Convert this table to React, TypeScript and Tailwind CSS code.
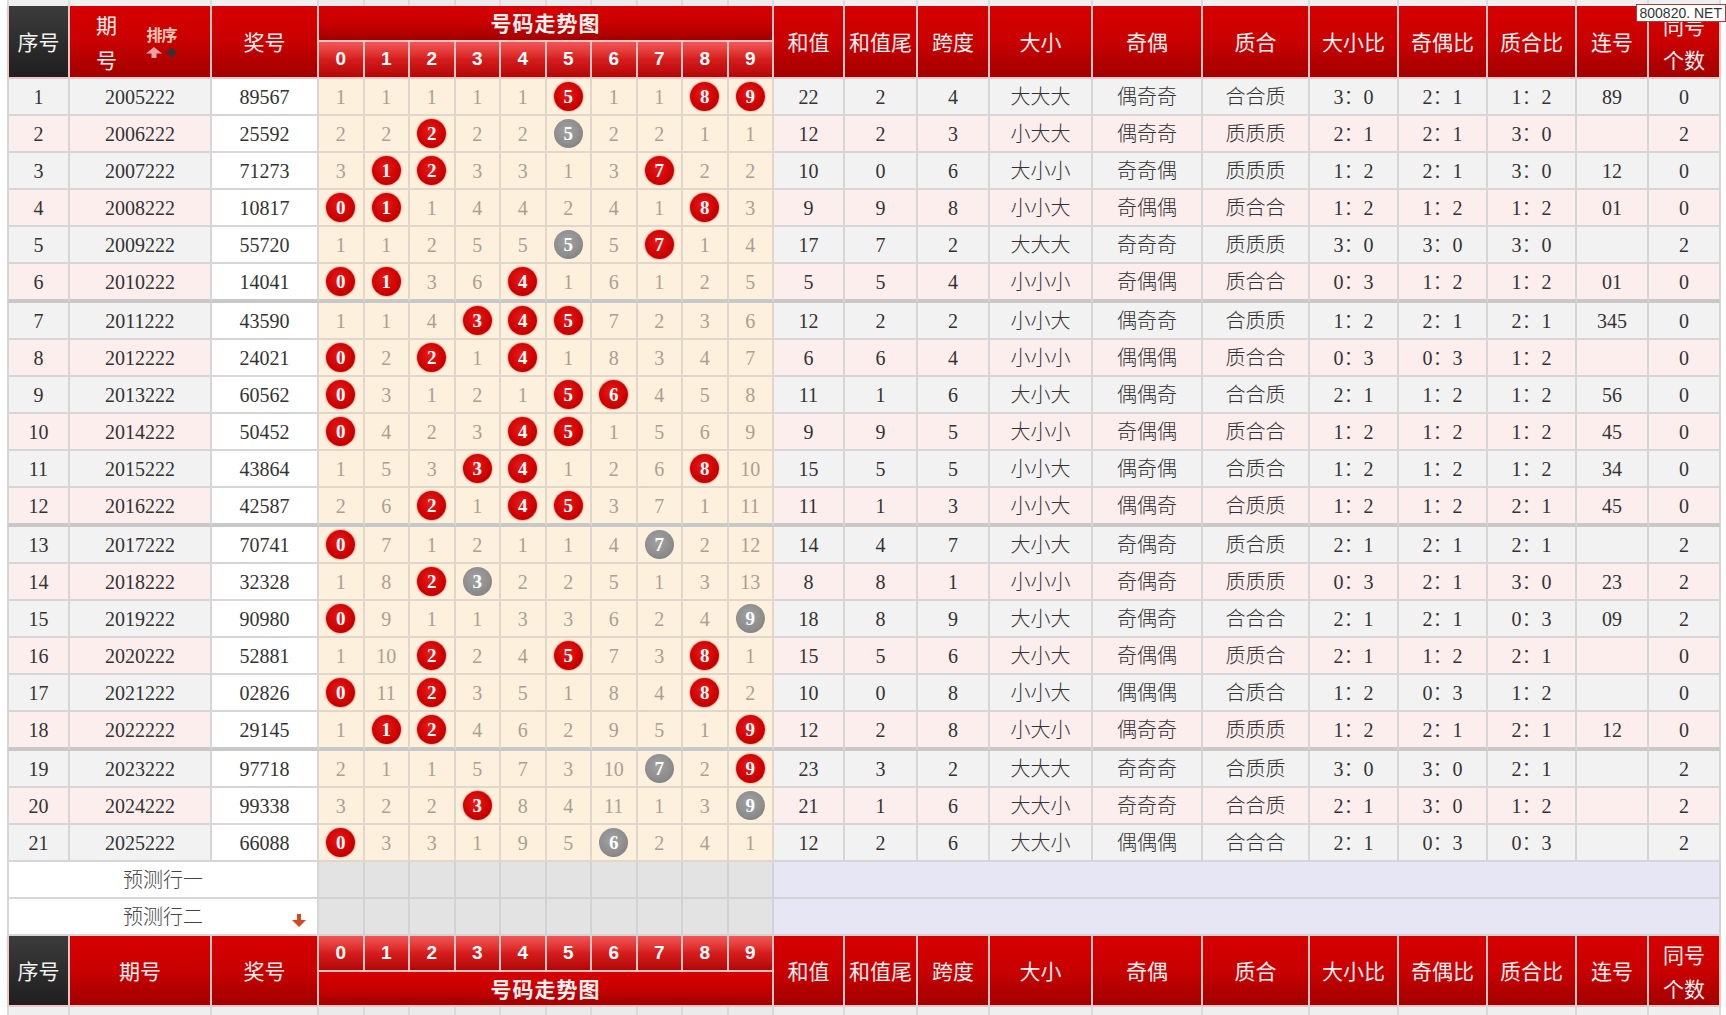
import React from "react";

const COLS =
  "grid grid-cols-[63px_142px_107px_repeat(10,45.5px)_71px_73px_72px_103px_110px_107px_89px_89px_89px_72px_72px]";

type Row = {
  seq: number;
  issue: string;
  prize: string;
  d: string[];
  r: string[];
};

const rows: Row[] = [
  { seq: 1, issue: "2005222", prize: "89567", d: ["1","1","1","1","1","r","1","1","r","r"], r: ["22","2","4","大大大","偶奇奇","合合质","3：0","2：1","1：2","89","0"] },
  { seq: 2, issue: "2006222", prize: "25592", d: ["2","2","r","2","2","g","2","2","1","1"], r: ["12","2","3","小大大","偶奇奇","质质质","2：1","2：1","3：0","","2"] },
  { seq: 3, issue: "2007222", prize: "71273", d: ["3","r","r","3","3","1","3","r","2","2"], r: ["10","0","6","大小小","奇奇偶","质质质","1：2","2：1","3：0","12","0"] },
  { seq: 4, issue: "2008222", prize: "10817", d: ["r","r","1","4","4","2","4","1","r","3"], r: ["9","9","8","小小大","奇偶偶","质合合","1：2","1：2","1：2","01","0"] },
  { seq: 5, issue: "2009222", prize: "55720", d: ["1","1","2","5","5","g","5","r","1","4"], r: ["17","7","2","大大大","奇奇奇","质质质","3：0","3：0","3：0","","2"] },
  { seq: 6, issue: "2010222", prize: "14041", d: ["r","r","3","6","r","1","6","1","2","5"], r: ["5","5","4","小小小","奇偶偶","质合合","0：3","1：2","1：2","01","0"] },
  { seq: 7, issue: "2011222", prize: "43590", d: ["1","1","4","r","r","r","7","2","3","6"], r: ["12","2","2","小小大","偶奇奇","合质质","1：2","2：1","2：1","345","0"] },
  { seq: 8, issue: "2012222", prize: "24021", d: ["r","2","r","1","r","1","8","3","4","7"], r: ["6","6","4","小小小","偶偶偶","质合合","0：3","0：3","1：2","","0"] },
  { seq: 9, issue: "2013222", prize: "60562", d: ["r","3","1","2","1","r","r","4","5","8"], r: ["11","1","6","大小大","偶偶奇","合合质","2：1","1：2","1：2","56","0"] },
  { seq: 10, issue: "2014222", prize: "50452", d: ["r","4","2","3","r","r","1","5","6","9"], r: ["9","9","5","大小小","奇偶偶","质合合","1：2","1：2","1：2","45","0"] },
  { seq: 11, issue: "2015222", prize: "43864", d: ["1","5","3","r","r","1","2","6","r","10"], r: ["15","5","5","小小大","偶奇偶","合质合","1：2","1：2","1：2","34","0"] },
  { seq: 12, issue: "2016222", prize: "42587", d: ["2","6","r","1","r","r","3","7","1","11"], r: ["11","1","3","小小大","偶偶奇","合质质","1：2","1：2","2：1","45","0"] },
  { seq: 13, issue: "2017222", prize: "70741", d: ["r","7","1","2","1","1","4","g","2","12"], r: ["14","4","7","大小大","奇偶奇","质合质","2：1","2：1","2：1","","2"] },
  { seq: 14, issue: "2018222", prize: "32328", d: ["1","8","r","g","2","2","5","1","3","13"], r: ["8","8","1","小小小","奇偶奇","质质质","0：3","2：1","3：0","23","2"] },
  { seq: 15, issue: "2019222", prize: "90980", d: ["r","9","1","1","3","3","6","2","4","g"], r: ["18","8","9","大小大","奇偶奇","合合合","2：1","2：1","0：3","09","2"] },
  { seq: 16, issue: "2020222", prize: "52881", d: ["1","10","r","2","4","r","7","3","r","1"], r: ["15","5","6","大小大","奇偶偶","质质合","2：1","1：2","2：1","","0"] },
  { seq: 17, issue: "2021222", prize: "02826", d: ["r","11","r","3","5","1","8","4","r","2"], r: ["10","0","8","小小大","偶偶偶","合质合","1：2","0：3","1：2","","0"] },
  { seq: 18, issue: "2022222", prize: "29145", d: ["1","r","r","4","6","2","9","5","1","r"], r: ["12","2","8","小大小","偶奇奇","质质质","1：2","2：1","2：1","12","0"] },
  { seq: 19, issue: "2023222", prize: "97718", d: ["2","1","1","5","7","3","10","g","2","r"], r: ["23","3","2","大大大","奇奇奇","合质质","3：0","3：0","2：1","","2"] },
  { seq: 20, issue: "2024222", prize: "99338", d: ["3","2","2","r","8","4","11","1","3","g"], r: ["21","1","6","大大小","奇奇奇","合合质","2：1","3：0","1：2","","2"] },
  { seq: 21, issue: "2025222", prize: "66088", d: ["r","3","3","1","9","5","g","2","4","1"], r: ["12","2","6","大大小","偶偶偶","合合合","2：1","0：3","0：3","","2"] },
];

const DIGIT_COLS = [
  "col-start-4",
  "col-start-5",
  "col-start-6",
  "col-start-7",
  "col-start-8",
  "col-start-9",
  "col-start-10",
  "col-start-11",
  "col-start-12",
  "col-start-13",
];

const RIGHT_HEADS = ["和值", "和值尾", "跨度", "大小", "奇偶", "质合", "大小比", "奇偶比", "质合比", "连号"];

const SERIF = "font-['Liberation_Serif','Noto_Sans_CJK_SC',serif]";
const SANS = "font-['Noto_Sans_CJK_SC',sans-serif]";

const HRED =
  "flex items-center justify-center border-r-2 border-b-2 border-[#f2c4c4] bg-linear-to-b from-[#d70000] via-[#c90000] to-[#a20000] text-[#fff1f1] text-[21px]";
const HDARK =
  "flex items-center justify-center border-l-2 border-r-2 border-b-2 border-[#f2c4c4] bg-linear-to-b from-[#3c3c3c] to-[#1f1f1f] text-[#f2f2f2] text-[21px]";
const HDIGIT =
  "flex items-center justify-center border-r-2 border-b-2 border-[#f2c4c4] bg-linear-to-b from-[#f25555] via-[#d61c1c] to-[#b30606] text-white text-[19px] font-bold font-['Liberation_Sans',sans-serif]";

function Ball({ n, gray }: { n: number; gray?: boolean }) {
  return (
    <span
      className={`flex h-[29px] w-[29px] items-center justify-center rounded-full text-[19px] font-bold leading-none text-white font-['Liberation_Serif',serif] ${
        gray
          ? "bg-[radial-gradient(circle_at_45%_40%,#a2a2a2_0%,#8c8c8c_60%,#747474_100%)]"
          : "bg-[radial-gradient(circle_at_45%_40%,#e81a1a_0%,#cc0000_60%,#a40000_100%)] shadow-[0_0_2px_rgba(160,0,0,0.7)]"
      }`}
    >
      {n}
    </span>
  );
}

function Strip({ h }: { h: string }) {
  return (
    <div className={`${COLS} ${h}`}>
      {Array.from({ length: 24 }).map((_, i) => (
        <div
          key={i}
          className={`border-r-2 border-[#dadada] ${i === 0 ? "border-l-2" : ""} ${
            i >= 3 && i < 13 ? "bg-[#ebebeb]" : "bg-[#efefef]"
          }`}
        />
      ))}
    </div>
  );
}

function UpArrow() {
  return (
    <svg width="16" height="11" viewBox="0 0 16 11">
      <path d="M8 0 L16 6.5 L10.5 6.5 L10.5 11 L5.5 11 L5.5 6.5 L0 6.5 Z" fill="#eba3a3" />
    </svg>
  );
}

function Diamond() {
  return (
    <svg width="11" height="11" viewBox="0 0 11 11">
      <path d="M5.5 0 L11 5.5 L5.5 11 L0 5.5 Z" fill="#3b3030" />
    </svg>
  );
}

function TopHeader() {
  return (
    <div className={`${COLS} grid-rows-[36px_37px] ${SANS}`}>
      <div className={`${HDARK} row-span-2 col-start-1 row-start-1`}>序号</div>
      <div className={`${HRED} row-span-2 col-start-2 row-start-1 justify-start`}>
        <div className="pl-[26px] text-[21px] leading-[35px]">
          <div>期</div>
          <div>号</div>
        </div>
        <div className="ml-[29px] flex flex-col items-center">
          <div className="text-[16px] font-bold leading-[16px] tracking-[-1px] text-[#f8c6b6]">排序</div>
          <div className="mt-[5px] flex items-center gap-[4px]">
            <UpArrow />
            <Diamond />
          </div>
        </div>
      </div>
      <div className={`${HRED} row-span-2 col-start-3 row-start-1`}>奖号</div>
      <div className={`${HRED} col-span-10 col-start-4 row-start-1 text-[20px] font-bold tracking-[1px]`}>
        号码走势图
      </div>
      {Array.from({ length: 10 }).map((_, i) => (
        <div key={i} className={`${HDIGIT} ${DIGIT_COLS[i]} row-start-2`}>
          {i}
        </div>
      ))}
      {RIGHT_HEADS.map((t) => (
        <div key={t} className={`${HRED} row-span-2 row-start-1`}>
          {t}
        </div>
      ))}
      <div className={`${HRED} row-span-2 row-start-1 flex-col leading-[34px]`}>
        <div>同号</div>
        <div>个数</div>
      </div>
    </div>
  );
}

function BottomHeader() {
  return (
    <div className={`${COLS} grid-rows-[36px_35px] ${SANS}`}>
      <div className={`${HDARK} row-span-2 col-start-1 row-start-1`}>序号</div>
      <div className={`${HRED} row-span-2 col-start-2 row-start-1`}>期号</div>
      <div className={`${HRED} row-span-2 col-start-3 row-start-1`}>奖号</div>
      {Array.from({ length: 10 }).map((_, i) => (
        <div key={i} className={`${HDIGIT} ${DIGIT_COLS[i]} row-start-1`}>
          {i}
        </div>
      ))}
      <div className={`${HRED} col-span-10 col-start-4 row-start-2 text-[20px] font-bold tracking-[1px]`}>
        号码走势图
      </div>
      {RIGHT_HEADS.map((t) => (
        <div key={t} className={`${HRED} row-span-2 row-start-1`}>
          {t}
        </div>
      ))}
      <div className={`${HRED} row-span-2 row-start-1 flex-col leading-[34px]`}>
        <div>同号</div>
        <div>个数</div>
      </div>
    </div>
  );
}

function DataRow({ row, idx }: { row: Row; idx: number }) {
  const pink = idx % 2 === 1;
  const bg = pink ? "bg-[#fdeeee]" : "bg-[#f2f2f2]";
  const sep = row.seq === 6 || row.seq === 12 || row.seq === 18;
  const bb = sep ? "border-b-4 border-b-[#c8c8c8]" : "border-b-2";
  const h = sep ? "h-[39px]" : "h-[37px]";
  const cell = `flex items-center justify-center border-r-2 ${bb}`;
  return (
    <div className={`${COLS} ${h} ${SERIF} text-[20px] font-light leading-none text-[#333]`}>
      <div className={`${cell} border-l-2 border-[#d6d6d6] ${bg}`}>{row.seq}</div>
      <div className={`${cell} border-[#d6d6d6] ${bg}`}>{row.issue}</div>
      <div className={`${cell} border-[#d6d6d6] bg-white`}>{row.prize}</div>
      {row.d.map((v, i) => (
        <div key={i} className={`${cell} border-[#e0d7ca] bg-[#fdf0dc] text-[#ab9f91]`}>
          {v === "r" ? <Ball n={i} /> : v === "g" ? <Ball n={i} gray /> : v}
        </div>
      ))}
      {row.r.map((v, i) => (
        <div key={i} className={`${cell} border-[#d6d6d6] ${bg}`}>
          {v}
        </div>
      ))}
    </div>
  );
}

function DownArrow() {
  return (
    <svg width="14" height="14" viewBox="0 0 14 14">
      <path d="M5 0 H9 V6 H14 L7 13 L0 6 H5 Z" fill="#d8461c" />
    </svg>
  );
}

function PredictRow({ label, arrow }: { label: string; arrow?: boolean }) {
  return (
    <div className={`${COLS} h-[37px] ${SERIF} text-[20px] font-light leading-none text-[#444]`}>
      <div className="relative col-span-3 flex items-center justify-center border-l-2 border-r-2 border-b-2 border-[#d6d6d6] bg-white">
        {label}
        {arrow && (
          <span className="absolute bottom-[6px] right-[11px] flex">
            <DownArrow />
          </span>
        )}
      </div>
      {Array.from({ length: 10 }).map((_, i) => (
        <div key={i} className="border-r-2 border-b-2 border-[#d2d2d2] bg-[#e3e3e3]" />
      ))}
      <div className="col-span-11 border-r-2 border-b-2 border-[#d2d2d2] bg-[#e6e6f4]" />
    </div>
  );
}

export default function App() {
  return (
    <div className="relative h-[1015px] w-[1726px] overflow-hidden bg-white pl-[7px]">
      <Strip h="h-[6px]" />
      <TopHeader />
      {rows.map((row, idx) => (
        <DataRow key={row.seq} row={row} idx={idx} />
      ))}
      <PredictRow label="预测行一" />
      <PredictRow label="预测行二" arrow />
      <BottomHeader />
      <Strip h="h-[8px]" />
      <div className="absolute right-0 top-[4px] border border-[#b03a3a] bg-white px-[3px] text-[14px] leading-[16px] text-[#333] font-['Liberation_Sans',sans-serif]">
        800820. NET
      </div>
    </div>
  );
}
